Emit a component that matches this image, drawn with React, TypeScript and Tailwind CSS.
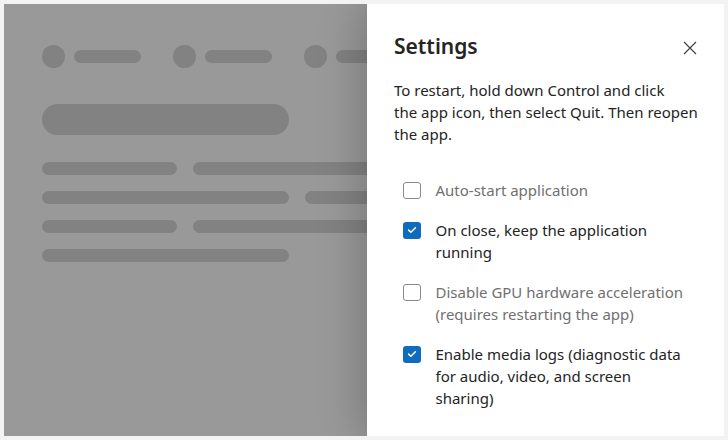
import * as React from 'react';

const font = { fontFamily: '"Noto Sans", "Open Sans", sans-serif' };

const Check = () => (
  <svg width="10" height="8" viewBox="0 0 10 8" fill="none">
    <path d="M1.6 4.1 3.9 6.3 8.4 1.7" stroke="white" strokeWidth="1.5" strokeLinecap="round" strokeLinejoin="round" />
  </svg>
);

type Item = { lines: string[]; checked: boolean; muted: boolean };

const items: Item[] = [
  { lines: ['Auto-start application'], checked: false, muted: true },
  { lines: ['On close, keep the application', 'running'], checked: true, muted: false },
  { lines: ['Disable GPU hardware acceleration', '(requires restarting the app)'], checked: false, muted: true },
  { lines: ['Enable media logs (diagnostic data', 'for audio, video, and screen', 'sharing)'], checked: true, muted: false },
];

const Skeleton = () => (
  <div className="flex flex-col pl-[38px] pt-[41px]">
    <div className="flex items-center gap-8 h-[23px]">
      {[0, 1, 2].map((i) => (
        <div key={i} className="flex items-center gap-[9px] shrink-0">
          <div className="w-[23px] h-[23px] rounded-full bg-[#828282]" />
          <div className="w-[67px] h-[13px] rounded-full bg-[#828282]" />
        </div>
      ))}
    </div>
    <div className="mt-[36px] w-[247px] h-[31px] rounded-full bg-[#828282]" />
    <div className="mt-[27px] flex flex-col gap-4">
      <div className="flex gap-4">
        <div className="w-[135px] h-[13px] rounded-full bg-[#828282] shrink-0" />
        <div className="w-[247px] h-[13px] rounded-full bg-[#828282] shrink-0" />
      </div>
      <div className="flex gap-4">
        <div className="w-[247px] h-[13px] rounded-full bg-[#828282] shrink-0" />
        <div className="w-[135px] h-[13px] rounded-full bg-[#828282] shrink-0" />
      </div>
      <div className="flex gap-4">
        <div className="w-[135px] h-[13px] rounded-full bg-[#828282] shrink-0" />
        <div className="w-[247px] h-[13px] rounded-full bg-[#828282] shrink-0" />
      </div>
      <div className="flex gap-4">
        <div className="w-[247px] h-[13px] rounded-full bg-[#828282] shrink-0" />
      </div>
    </div>
  </div>
);

export default function App() {
  return (
    <div className="w-[728px] h-[440px] bg-[#f3f3f3] p-1" style={font}>
      <div className="w-full h-full flex overflow-hidden">
        <div className="w-[363px] h-full bg-[#999999] overflow-hidden shrink-0">
          <Skeleton />
        </div>
        <div className="w-[357px] h-full bg-white shrink-0 shadow-[-6px_0_40px_rgba(0,0,0,0.22)] pl-[27px] pr-6 pt-[28px]">
          <div className="flex items-center justify-between h-[28px]">
            <h2 className="text-[21px] leading-[28px] font-semibold text-[#242424]">Settings</h2>
            <svg width="14" height="14" viewBox="0 0 14 14" className="mr-[3px] translate-y-[2px]">
              <path d="M1 1 13 13M13 1 1 13" stroke="#424242" strokeWidth="1.2" />
            </svg>
          </div>
          <p className="mt-[19px] text-[15px] leading-[22px] text-[#242424] whitespace-nowrap">
            To restart, hold down Control and click
            <br />
            the app icon, then select Quit. Then reopen
            <br />
            the app.
          </p>
          <div className="mt-[34px] flex flex-col gap-[18px] pl-[9px]">
            {items.map((it) => (
              <div key={it.lines[0]} className="flex items-start gap-[15px]">
                {it.checked ? (
                  <span className="mt-[2.5px] w-[17.5px] h-[17.5px] shrink-0 rounded-[3px] bg-[#0f6cbd] flex items-center justify-center">
                    <Check />
                  </span>
                ) : (
                  <span className="mt-[2.5px] w-[17.5px] h-[17.5px] shrink-0 rounded-[3px] border border-[#8a8a8a] bg-white" />
                )}
                <span className={`text-[15px] leading-[22px] whitespace-nowrap ${it.muted ? 'text-[#707070]' : 'text-[#242424]'}`}>
                  {it.lines.map((l, i) => (
                    <React.Fragment key={i}>
                      {i > 0 && <br />}
                      {l}
                    </React.Fragment>
                  ))}
                </span>
              </div>
            ))}
          </div>
        </div>
      </div>
    </div>
  );
}
